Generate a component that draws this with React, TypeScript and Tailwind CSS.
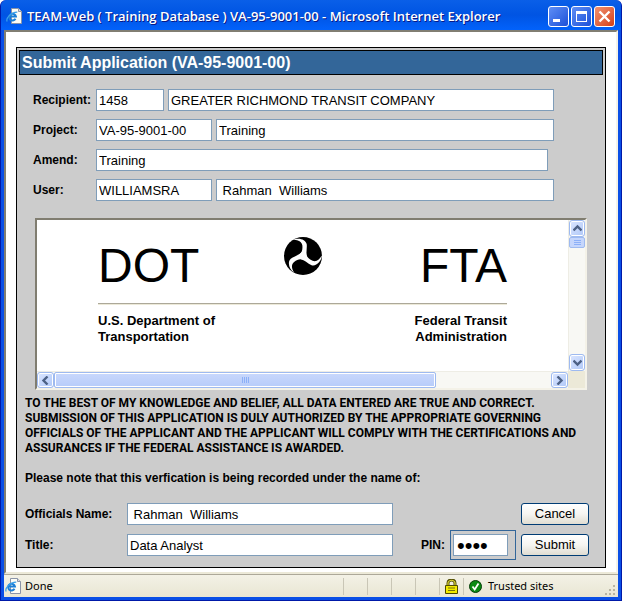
/**
 * Submit Application window
 * Browser pop-up with the application summary, notice and sign-off fields
 */

import React from 'react';

interface FieldProps {
  id: string;
  label?: string;
  value: string;
  type?: string;
  className?: string;
}

interface ScrollButtonProps {
  label: string;
  path: string;
  className?: string;
}

const Field: React.FC<FieldProps> = ({ id, label, value, type = 'text', className = '' }) => (
  <input
    id={id}
    type={type}
    defaultValue={value}
    aria-label={label}
    className={`h-[22px] min-w-0 rounded-none border border-[#7f9db9] bg-white px-[2px] text-[13px] text-black outline-none ${className}`}
  />
);

const ScrollButton: React.FC<ScrollButtonProps> = ({ label, path, className = '' }) => (
  <button
    type="button"
    aria-label={label}
    className={`flex shrink-0 items-center justify-center rounded-[3px] border border-[#9ebaf0] bg-linear-to-br from-[#dbe6ff] to-[#b0c8f8] ring-1 ring-white ring-inset ${className}`}
  >
    <svg width="9" height="9" viewBox="0 0 9 9" fill="none" stroke="#4d6185" strokeWidth="2.4">
      <path d={path} />
    </svg>
  </button>
);

const PageIcon: React.FC = () => (
  <svg width="17" height="17" viewBox="0 0 17 17" className="shrink-0">
    <path d="M5.500 .5h7l3 3v12h-10z" fill="#fdfdf6" stroke="#8b94a8" />
    <path d="M12.500 .5v3h3" fill="#d8dce8" stroke="#8b94a8" />
    <path d="M9.500 10.800A3.400 3.400 0 1 1 9.900 8.500H3.500" fill="none" stroke="#1c7fd6" strokeWidth="2" />
    <path d="M1.200 13.500C-.5 10.500 5 4 11.300 4.200" fill="none" stroke="#3aa0ea" strokeWidth="1.200" />
  </svg>
);

// One arm of the seal, repeated three times around the centre
const sealArm = 'M-30-48C-14-57 8-50 11-36C13-24 8-10 12 4L8 12L-10 6L-12-4C-2-11-1-20-2-32C-4-44-16-49-30-48Z';

const TriskelionSeal: React.FC = () => (
  <svg width="38" height="38" viewBox="-57 -57 114 114" role="img" aria-label="Department seal">
    <circle r="57" fill="black" />
    {[0, 120, 240].map(angle => (
      <path key={angle} d={sealArm} fill="white" transform={`rotate(${angle})`} />
    ))}
  </svg>
);

const TitleBar: React.FC = () => (
  <header className="flex h-[30px] items-center gap-[4px] rounded-t-[6px] bg-linear-to-b from-[#0a5fe8] via-[#0054e3] to-[#0262fb] pt-[3px] pr-[6px] pl-[5px]">
    <PageIcon />
    <h1 className="min-w-0 flex-1 truncate font-['Open_Sans',sans-serif] text-[13px] font-semibold text-white [text-shadow:1px_1px_0_#0a1883]">
      TEAM-Web ( Training Database ) VA-95-9001-00 - Microsoft Internet Explorer
    </h1>
    <div className="flex gap-[2px]">
      <button type="button" aria-label="Minimize" className="h-[21px] w-[21px] rounded-[3px] border border-white bg-linear-to-br from-[#5f8ef5] to-[#1c4fd8]">
        <svg width="19" height="19" viewBox="0 0 19 19">
          <path d="M4 12h7v3H4z" fill="white" />
        </svg>
      </button>
      <button type="button" aria-label="Maximize" className="h-[21px] w-[21px] rounded-[3px] border border-white bg-linear-to-br from-[#5f8ef5] to-[#1c4fd8]">
        <svg width="19" height="19" viewBox="0 0 19 19">
          <path d="M4 4h11v11H4zM5 7v7h9V7z" fill="white" fillRule="evenodd" />
        </svg>
      </button>
      <button type="button" aria-label="Close" className="h-[21px] w-[21px] rounded-[3px] border border-white bg-linear-to-br from-[#f0906f] to-[#d33d10]">
        <svg width="19" height="19" viewBox="0 0 19 19" stroke="white" strokeWidth="2.400">
          <path d="M4.500 4.500l10 10M14.500 4.500l-10 10" />
        </svg>
      </button>
    </div>
  </header>
);

const labelClass = 'w-[63px] shrink-0 text-[12px] font-bold';

const ApplicationFields: React.FC = () => (
  <div className="flex flex-col gap-[8px] pt-[14px] pr-[51px] pl-[16px]">
    <div className="flex items-center">
      <label htmlFor="recipient" className={labelClass}>Recipient:</label>
      <Field id="recipient" value="1458" className="mr-[4px] w-[68px]" />
      <Field id="recipient-name" label="Recipient name" value="GREATER RICHMOND TRANSIT COMPANY" className="flex-1" />
    </div>
    <div className="flex items-center">
      <label htmlFor="project" className={labelClass}>Project:</label>
      <Field id="project" value="VA-95-9001-00" className="mr-[4px] w-[116px]" />
      <Field id="project-name" label="Project name" value="Training" className="flex-1" />
    </div>
    <div className="flex items-center pr-[6px]">
      <label htmlFor="amend" className={labelClass}>Amend:</label>
      <Field id="amend" value="Training" className="flex-1" />
    </div>
    <div className="flex items-center">
      <label htmlFor="user" className={labelClass}>User:</label>
      <Field id="user" value="WILLIAMSRA" className="mr-[4px] w-[116px]" />
      <Field id="user-name" label="User name" value=" Rahman  Williams" className="flex-1" />
    </div>
  </div>
);

const NoticeFrame: React.FC = () => (
  <section className="mx-[18px] mt-[17px] grid grid-cols-[1fr_17px] grid-rows-[151px_17px] border-2 border-t-[#807d70] border-r-[#f4f2e8] border-b-[#f4f2e8] border-l-[#807d70] bg-white">
    <div className="pt-[17px] pr-[61px] pl-[61px]">
      <div className="grid grid-cols-[1fr_auto_1fr] items-start text-[48px] leading-[58px]">
        <span>DOT</span>
        <TriskelionSeal />
        <span className="text-right">FTA</span>
      </div>
      <hr className="mt-[8px] border-t border-b border-t-[#aca899] border-b-[#ece9d8]" />
      <div className="mt-[8px] flex justify-between text-[13px] leading-[16px] font-bold">
        <p>U.S. Department of<br />Transportation</p>
        <p className="text-right">Federal Transit<br />Administration</p>
      </div>
    </div>

    {/* Vertical scrollbar */}
    <div className="flex flex-col border-l border-[#eeede5] bg-[#f8f8f4]">
      <ScrollButton label="Scroll up" path="M0.500 6.500l4-4 4 4" className="h-[17px]" />
      <div className="flex h-[11px] flex-col items-center justify-center gap-[1px] rounded-[2px] border border-[#9ebaf0] bg-[#c5d6fc]">
        <i className="h-px w-[7px] bg-[#8cb0f8]" />
        <i className="h-px w-[7px] bg-[#8cb0f8]" />
        <i className="h-px w-[7px] bg-[#8cb0f8]" />
      </div>
      <div className="flex-1" />
      <ScrollButton label="Scroll down" path="M0.500 2.500l4 4 4-4" className="h-[17px]" />
    </div>

    {/* Horizontal scrollbar */}
    <div className="flex border-t border-[#eeede5] bg-[#f8f8f4]">
      <ScrollButton label="Scroll left" path="M6.500 0.500l-4 4 4 4" className="w-[17px]" />
      <div className="flex w-[72%] items-center justify-center gap-[1px] rounded-[2px] border border-[#9ebaf0] bg-linear-to-b from-[#c9d8fc] to-[#b7ccfa] ring-1 ring-white ring-inset">
        <i className="h-[6px] w-px bg-[#8cb0f8]" />
        <i className="h-[6px] w-px bg-[#8cb0f8]" />
        <i className="h-[6px] w-px bg-[#8cb0f8]" />
        <i className="h-[6px] w-px bg-[#8cb0f8]" />
      </div>
      <div className="flex-1" />
      <ScrollButton label="Scroll right" path="M2.500 0.500l4 4-4 4" className="w-[17px]" />
    </div>
    <div className="bg-[#ece9d8]" />
  </section>
);

const buttonClass =
  'h-[22px] w-[68px] rounded-[3px] border border-[#003c74] bg-linear-to-b from-white via-[#f6f5f1] to-[#e0ddd2] text-[13px] leading-[18px]';

const SignOff: React.FC = () => (
  <div className="flex flex-col pt-[13px] pr-[16px] pb-[6px] pl-[8px]">
    <div className="flex h-[30px] items-center">
      <label htmlFor="official" className="w-[102px] shrink-0 text-[12px] font-bold">Officials Name:</label>
      <Field id="official" value=" Rahman  Williams" className="flex-1" />
      <div className="w-[128px]" />
      <button type="button" className={buttonClass}>Cancel</button>
    </div>
    <div className="flex h-[32px] items-center">
      <label htmlFor="title" className="w-[102px] shrink-0 text-[12px] font-bold">Title:</label>
      <Field id="title" value="Data Analyst" className="flex-1" />
      <label htmlFor="pin" className="ml-[28px] w-[29px] text-[12px] font-bold">PIN:</label>
      <div className="mr-[5px] flex h-[30px] w-[66px] items-center border border-[#336699] pl-[2px]">
        <input
          id="pin"
          type="password"
          defaultValue="1234"
          className="h-[22px] w-[55px] border border-[#7f9db9] bg-white px-[3px] text-[22px] outline-none"
        />
      </div>
      <button type="submit" className={buttonClass}>Submit</button>
    </div>
  </div>
);

const StatusBar: React.FC = () => (
  <footer className="flex h-[23px] shrink-0 items-center border-t border-[#aca899] bg-linear-to-b from-[#f3f1e6] to-[#e9e6d3] pl-[1px] font-['Noto_Sans',sans-serif] text-[11px]">
    <PageIcon />
    <span className="flex-1 pl-[3px]">Done</span>
    <i className="h-[17px] w-[24px] border-l border-[#c9c6b6]" />
    <i className="h-[17px] w-[24px] border-l border-[#c9c6b6]" />
    <i className="h-[17px] w-[24px] border-l border-[#c9c6b6]" />
    <i className="h-[17px] w-[24px] border-l border-[#c9c6b6]" />
    <div className="flex h-[17px] w-[24px] items-center justify-center border-l border-[#c9c6b6]">
      <svg width="13" height="15" viewBox="0 0 13 15">
        <path d="M3 7V4c0-4 7-4 7 0v3" fill="none" stroke="#57530a" strokeWidth="3" />
        <path d="M3 7V4c0-3.500 7-3.500 7 0v3" fill="none" stroke="#f5ee3a" strokeWidth="1" />
        <path d="M.5 6.500h12v8H.5z" fill="#f2ea00" stroke="#4d4a00" />
        <path d="M3 9h7M3 11.500h7" stroke="#77720a" />
      </svg>
    </div>
    <div className="flex h-[17px] w-[142px] items-center gap-[6px] border-l border-[#c9c6b6] pl-[5px]">
      <svg width="13" height="13" viewBox="0 0 13 13">
        <circle cx="6.500" cy="6.500" r="6" fill="#0a8a12" stroke="#063d08" />
        <path d="M3.500 6.500l2.200 3L9.500 3.500" fill="none" stroke="white" strokeWidth="1.800" />
      </svg>
      <span>Trusted sites</span>
    </div>
    <svg width="12" height="12" viewBox="0 0 12 12" fill="#b8b4a2" className="mr-[1px] self-end">
      <path d="M8 0h2v2H8zM8 4h2v2H8zM4 4h2v2H4zM8 8h2v2H8zM4 8h2v2H4zM0 8h2v2H0z" />
    </svg>
  </footer>
);

export default function App() {
  return (
    <div className="flex min-h-screen flex-col rounded-t-[6px] border-x border-b border-[#0019a8] bg-[#0a4fe6] font-['Liberation_Sans',sans-serif] text-black">
      <TitleBar />
      <div className="mx-[3px] mb-[3px] flex flex-1 flex-col">
        <main className="flex-1 border-2 border-t-[#817e72] border-r-[#f4f2e8] border-b-[#ece9d8] border-l-[#817e72] bg-white px-[10px] pt-[15px] pb-[4px]">
          <form className="border border-black bg-[#cccccc]">
            <h2 className="m-[2px] mb-0 h-[25px] border border-black bg-[#336699] pl-[2px] text-[16px] leading-[24px] font-bold text-white">
              Submit Application (VA-95-9001-00)
            </h2>
            <ApplicationFields />
            <NoticeFrame />
            <div className="px-[8px] pt-[6px] text-[12px] leading-[15px] font-bold">
              <p className="font-['Roboto',sans-serif]">
                TO THE BEST OF MY KNOWLEDGE AND BELIEF, ALL DATA ENTERED ARE TRUE AND CORRECT. SUBMISSION OF THIS
                APPLICATION IS DULY AUTHORIZED BY THE APPROPRIATE GOVERNING OFFICIALS OF THE APPLICANT AND THE
                APPLICANT WILL COMPLY WITH THE CERTIFICATIONS AND ASSURANCES IF THE FEDERAL ASSISTANCE IS AWARDED.
              </p>
              <p className="mt-[15px]">Please note that this verfication is being recorded under the name of:</p>
            </div>
            <SignOff />
          </form>
        </main>
        <StatusBar />
      </div>
    </div>
  );
}
